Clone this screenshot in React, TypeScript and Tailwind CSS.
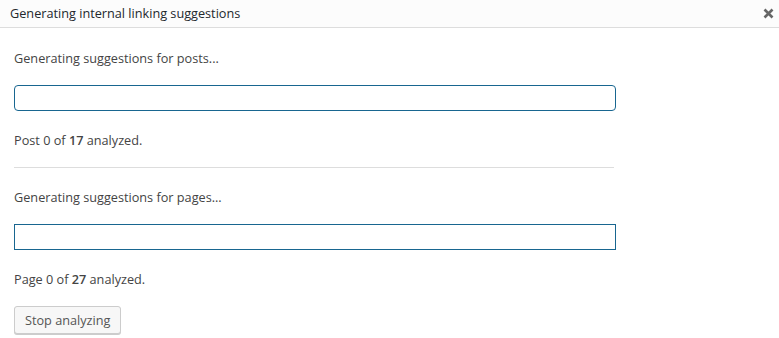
import React from 'react'

const font = { fontFamily: '"Open Sans", "Noto Sans", "Liberation Sans", sans-serif' }

function ProgressBar({ rounded }: { rounded?: boolean }) {
  return (
    <div
      className={
        'w-[602px] h-[26px] border border-[#186690] bg-white ' + (rounded ? 'rounded-[4px]' : '')
      }
    />
  )
}

export default function App() {
  return (
    <div className="w-[779px] h-[338px] bg-white text-[#444] overflow-hidden" style={font}>
      <div className="h-[28px] bg-[#fcfcfc] border-b border-[#dddddd] flex items-center justify-between pl-[10px] pr-[5px]">
        <h1 className="text-[12.7px] font-medium text-[#23282d] leading-none">
          Generating internal linking suggestions
        </h1>
        <button className="w-[12px] h-[20px] flex items-center justify-center">
          <svg width="11" height="11" viewBox="0 0 11 11">
            <path d="M1.5 1.5 L9.5 9.5 M9.5 1.5 L1.5 9.5" stroke="#666" strokeWidth="2.6" strokeLinecap="butt" />
          </svg>
        </button>
      </div>

      <div className="pl-[14px] pt-[20px] text-[12.7px] leading-[20px]">
        <p>Generating suggestions for posts...</p>
        <div className="mt-[17px]">
          <ProgressBar rounded />
        </div>
        <p className="mt-[19px]">
          Post 0 of <strong className="font-semibold">17</strong> analyzed.
        </p>
        <div className="mt-[17px] w-[600px] border-t border-[#dddddd]" />
        <p className="mt-[19px]">Generating suggestions for pages...</p>
        <div className="mt-[17px]">
          <ProgressBar />
        </div>
        <p className="mt-[19px]">
          Page 0 of <strong className="font-semibold">27</strong> analyzed.
        </p>
        <button className="mt-[17px] h-[28px] px-[10px] border border-[#cccccc] rounded-[3px] bg-[#f7f7f7] text-[#555] text-[12.7px] shadow-[0_1px_0_#cccccc]">
          Stop analyzing
        </button>
      </div>
    </div>
  )
}
